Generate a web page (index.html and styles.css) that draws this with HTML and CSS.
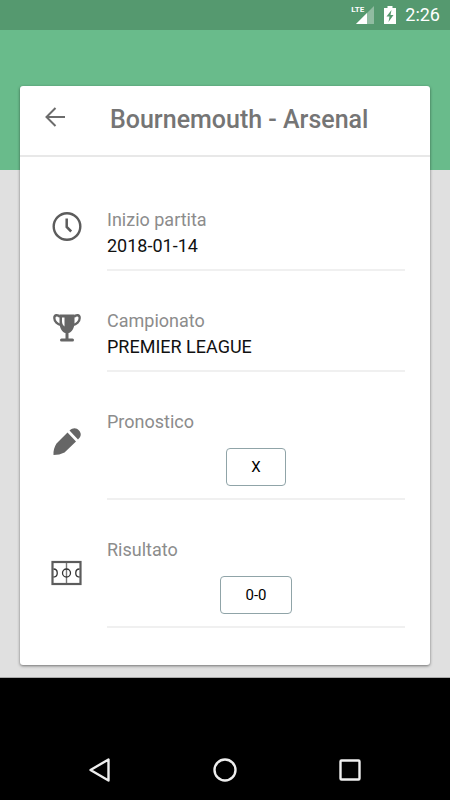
FILE: index.html
```html
<!DOCTYPE html>
<html lang="it">
<head>
<meta charset="utf-8">
<meta name="viewport" content="width=device-width, initial-scale=1">
<title>Bournemouth - Arsenal</title>
<link rel="stylesheet" href="styles.css">
</head>
<body>
<header class="status">
  <div class="signal">
    <svg width="24" height="20" viewBox="0 0 24 20" aria-hidden="true">
      <path d="M23 1V19H5z" fill="#fff" fill-opacity=".35"/>
      <path d="M16 8V19H5z" fill="#fff"/>
    </svg>
    <span class="network">LTE</span>
  </div>
  <svg class="battery" width="12" height="20" viewBox="0 0 12 20" aria-hidden="true">
    <path d="M3.500 1h5v2H12v16H0V3h3.500z" fill="#fff"/>
    <path d="M7.500 5L2.500 11.500h3L4.500 17l5-7H6.500z" fill="#55996f"/>
  </svg>
  <time class="clock">2:26</time>
</header>
<main class="page">
  <article class="card">
    <div class="card-head">
      <button class="back" type="button" aria-label="Indietro">
        <svg width="20" height="20" viewBox="0 0 20 20"><path d="M20 10H1.500M10.500 1L1.500 10l9 9" fill="none" stroke="#6c6c6c" stroke-width="2"/></svg>
      </button>
      <h1 class="title">Bournemouth - Arsenal</h1>
    </div>
    <div class="rows">
      <section class="row">
        <svg class="icon" viewBox="0 0 30 30" aria-hidden="true">
          <circle cx="15" cy="14.500" r="13.300" fill="none" stroke="#5c5c5c" stroke-width="2.400"/>
          <path d="M14.700 6.500v8.500l4.500 4.500" fill="none" stroke="#5c5c5c" stroke-width="2.500"/>
        </svg>
        <div class="field">
          <h2 class="label">Inizio partita</h2>
          <p class="value">2018-01-14</p>
        </div>
      </section>
      <section class="row">
        <svg class="icon" viewBox="0 0 30 30" aria-hidden="true">
          <path d="M7.500 1.500h15v8c0 6-3 10-6 10.500v5.500h4a1.500 1.500 0 0 1 0 3h-11a1.500 1.500 0 0 1 0-3h4V20c-3-.5-6-4.500-6-10.500z" fill="#666"/>
          <path d="M8 4C6 1.500 2.300 1.500 2.300 5c0 3.500 3.200 6.500 7 7M22 4c2-2.500 5.700-2.500 5.700 1 0 3.500-3.200 6.500-7 7" fill="none" stroke="#666" stroke-width="2.300"/>
          <path d="M10 4.500h2.500v9C10.500 12 10 10 10 8z" fill="#fff"/>
        </svg>
        <div class="field">
          <h2 class="label">Campionato</h2>
          <p class="value">PREMIER LEAGUE</p>
        </div>
      </section>
      <section class="row">
        <svg class="icon" viewBox="0 0 30 30" aria-hidden="true">
          <path d="M15.500 5.500L24 14.500 12.500 25.500Q7.500 28 1.500 28 1 22 4.500 16.500zM17.500 3.500C21 .3 24.500.5 27 3.500 29.500 6.500 29.500 9.300 26 12.500z" fill="#666"/>
        </svg>
        <div class="field">
          <h2 class="label">Pronostico</h2>
          <button class="choice" type="button">X</button>
        </div>
      </section>
      <section class="row">
        <svg class="icon" viewBox="0 0 30 30" aria-hidden="true">
          <rect x="0.500" y="7" width="28" height="22" fill="none" stroke="#5c5c5c" stroke-width="2.200"/>
          <path d="M14.500 8v20" stroke="#777" stroke-width="1.400"/>
          <path d="M1.500 14c5 0 5 8 0 8M27.500 14c-5 0-5 8 0 8" fill="none" stroke="#333" stroke-width="1.300"/>
          <circle cx="14.500" cy="18" r="4" fill="none" stroke="#333" stroke-width="1.300"/>
        </svg>
        <div class="field">
          <h2 class="label">Risultato</h2>
          <button class="choice" type="button">0-0</button>
        </div>
      </section>
    </div>
  </article>
</main>
<nav class="navbar" aria-label="Sistema">
  <button class="nav" type="button" aria-label="Indietro"><svg width="24" height="24" viewBox="0 0 24 24"><path d="M20.500 1.500v21L2.500 12z"/></svg></button>
  <button class="nav" type="button" aria-label="Home"><svg width="24" height="24" viewBox="0 0 24 24"><circle cx="12" cy="12" r="10.500"/></svg></button>
  <button class="nav" type="button" aria-label="Recenti"><svg width="24" height="24" viewBox="0 0 24 24"><rect x="2.500" y="2.500" width="19" height="19" rx="1"/></svg></button>
</nav>
</body>
</html>
```
FILE: styles.css
```css
* {
  box-sizing: border-box;
}

body {
  margin: 0;
  min-height: 100vh;
  display: flex;
  flex-direction: column;
  background: #000;
  font-family: Roboto, sans-serif;
}

button {
  margin: 0;
  padding: 0;
  border: 0;
  background: none;
  font-family: inherit;
}

svg {
  display: block;
  overflow: visible;
}

.status {
  height: 30px;
  padding: 0 10px;
  display: flex;
  align-items: center;
  justify-content: flex-end;
  background: #55996f;
  color: #fff;
}

.signal {
  position: relative;
}

.network {
  position: absolute;
  top: 0;
  left: 0;
  font-size: 8px;
  font-weight: 700;
  line-height: 10px;
}

.battery {
  margin: 0 9px;
}

.clock {
  font-size: 18px;
  line-height: 30px;
}

.page {
  padding: 56px 20px 12px;
  border-bottom: 1px solid #aaa;
  background: linear-gradient(#69bb8b 140px, #e0e0e0 140px);
}

.card {
  padding-bottom: 37px;
  border-radius: 3px;
  background: #fff;
  box-shadow: 0 1px 3px rgba(0, 0, 0, 0.5);
}

.card-head {
  display: flex;
  align-items: center;
  padding: 0 25px 2px;
  height: 71px;
  border-bottom: 2px solid #e8e8e8;
}

.back {
  padding-bottom: 5px;
}

.title {
  margin: 0 0 0 45px;
  font-size: 25px;
  font-weight: 500;
  line-height: 32px;
  color: #757575;
}

.rows {
  padding: 13px 25px 0 32px;
}

.row {
  display: flex;
  align-items: stretch;
}

.icon {
  flex: none;
  width: 30px;
  height: 30px;
  align-self: center;
  margin: 12px 25px 0 0;
}

.field {
  flex: 1;
  padding: 37px 0 10px;
  border-bottom: 2px solid #f0f0f0;
}

.label,
.value {
  margin: 0;
  font-size: 18px;
  font-weight: 400;
  line-height: 26px;
}

.label {
  color: #8c8c8c;
}

.value {
  color: #111;
}

.choice {
  display: block;
  margin: 13px auto 2px;
  padding: 0 24px;
  border: 1px solid #90a4a8;
  border-radius: 4px;
  font-size: 15px;
  line-height: 36px;
  color: #000;
}

.navbar {
  display: flex;
  justify-content: center;
  gap: 101px;
  margin-top: auto;
  padding-bottom: 18px;
}

.nav svg {
  fill: none;
  stroke: #eee;
  stroke-width: 2.400;
  stroke-linejoin: round;
}
```
